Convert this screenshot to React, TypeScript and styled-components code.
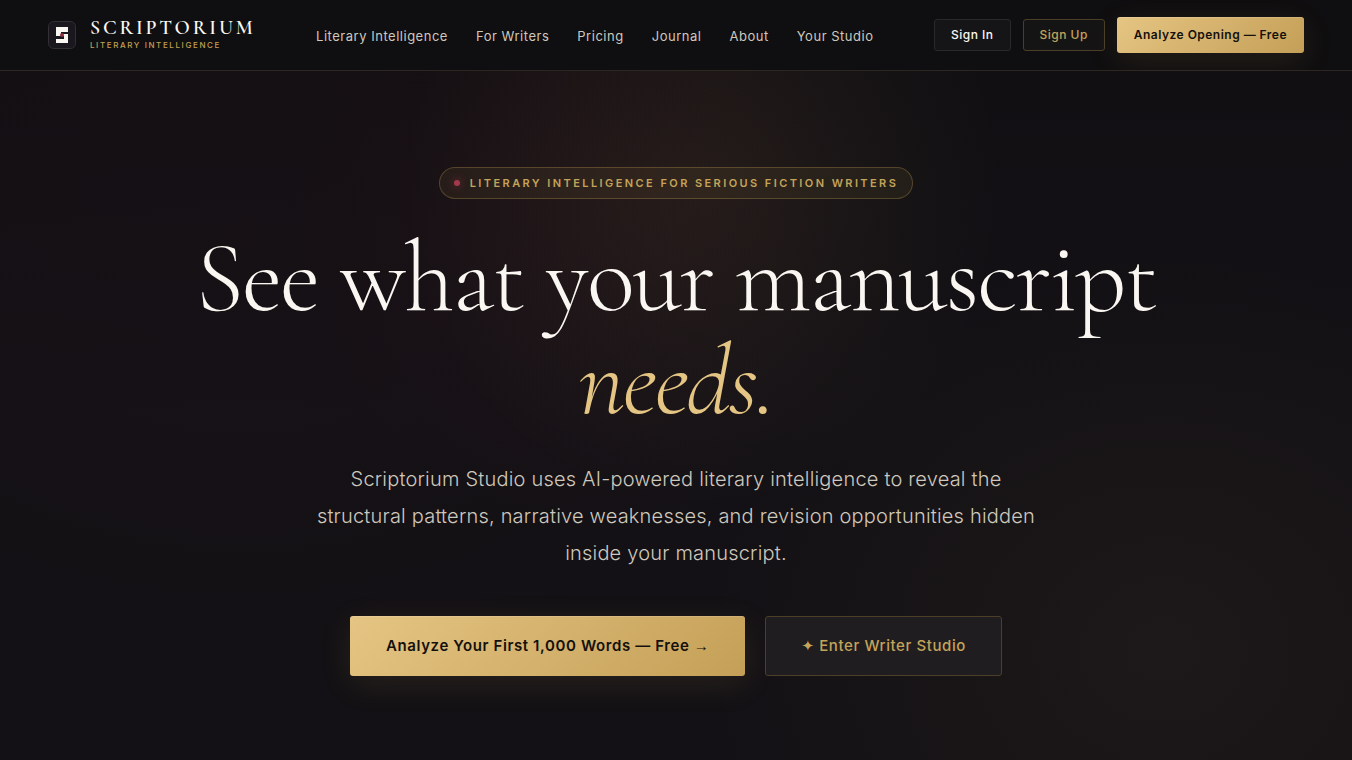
import React from "react";
import styled, { createGlobalStyle, css } from "styled-components";

const sans = `Inter, "Liberation Sans", sans-serif`;
const serif = `"Cormorant Garamond", "Liberation Serif", serif`;

const GlobalStyle = createGlobalStyle`
  *, *::before, *::after { box-sizing: border-box; }
  body {
    margin: 0;
    background: #0d0c0e;
    color: #faf7f2;
    font-family: ${sans};
    -webkit-font-smoothing: antialiased;
  }
`;

const Page = styled.div`
  min-height: 100vh;
  display: flex;
  flex-direction: column;
`;

const Header = styled.header`
  display: flex;
  align-items: center;
  justify-content: space-between;
  padding: 17px 48px;
  background: #0f0e10;
  border-bottom: 1px solid #2c2720;
`;

const Brand = styled.a`
  display: flex;
  align-items: center;
  gap: 14px;
  color: inherit;
  text-decoration: none;
`;

const BrandText = styled.span`
  display: flex;
  flex-direction: column;
`;

const BrandName = styled.span`
  font-family: ${serif};
  font-size: 20px;
  line-height: 20px;
  font-weight: 600;
  letter-spacing: 0.14em;
`;

const BrandTag = styled.span`
  font-size: 8px;
  line-height: 14px;
  font-weight: 500;
  letter-spacing: 0.2em;
  text-transform: uppercase;
  color: #c4a052;
`;

const Nav = styled.nav`
  display: flex;
  gap: 28px;
  padding-top: 2px;
`;

const NavLink = styled.a`
  font-size: 13px;
  line-height: 20px;
  letter-spacing: 0.04em;
  color: #cfc8bd;
  text-decoration: none;
`;

const Actions = styled.div<{ $large?: boolean }>`
  display: flex;
  align-items: center;
  justify-content: center;
  flex-wrap: wrap;
  gap: ${(p) => (p.$large ? 20 : 12)}px;
`;

const tones = {
  primary: css`
    color: #14100c;
    font-weight: 600;
    border: 0;
    background: linear-gradient(135deg, #e5c583 0%, #c49f57 100%);
    box-shadow: 0 8px 32px rgba(196, 160, 82, 0.12), inset 0 1px 0 rgba(255, 255, 255, 0.15);
  `,
  gold: css`
    color: #c4a35a;
    border: 1px solid #4b3f29;
    background: #151415;
  `,
  plain: css`
    color: #faf7f2;
    border: 1px solid #29282a;
    background: #151517;
  `,
};

const Button = styled.button<{ $tone: keyof typeof tones; $size?: "large" }>`
  font-family: ${sans};
  font-size: 12px;
  line-height: 20px;
  font-weight: 500;
  letter-spacing: 0.04em;
  padding: ${(p) => (p.$tone === "primary" ? "8px 17px" : "5px 16px")};
  border-radius: 3px;
  cursor: pointer;
  ${(p) => tones[p.$tone]}
  ${(p) =>
    p.$size === "large" &&
    css`
      font-size: 15px;
      min-height: 60px;
      padding: 0 ${p.$tone === "primary" ? 36 : 35}px;
    `}
  ${(p) => p.$size === "large" && p.$tone === "gold" && css`background: #1f1d1f;`}
`;

const Arrow = styled.span`
  font-family: "Liberation Sans", sans-serif;
`;

const Star = styled.span`
  font-family: "DejaVu Sans", sans-serif;
  font-weight: 700;
`;

const Hero = styled.main`
  flex: 1;
  display: flex;
  flex-direction: column;
  align-items: center;
  padding: 96px 48px 80px;
  text-align: center;
  background:
    radial-gradient(ellipse 300px 320px at 52% 17%, rgba(180, 160, 82, 0.08), transparent),
    radial-gradient(ellipse 320px 320px at 45% 20%, rgba(120, 30, 50, 0.08), transparent),
    radial-gradient(ellipse 620px 460px at 18% 24%, rgba(120, 30, 50, 0.04), transparent),
    radial-gradient(ellipse 460px 400px at 86% 84%, rgba(190, 140, 82, 0.06), transparent),
    linear-gradient(180deg, #110f12 0%, #131115 50%, #131115 100%);
`;

const Pill = styled.p`
  display: flex;
  align-items: center;
  gap: 10px;
  margin: 0;
  padding: 7px 14px;
  border: 1px solid rgba(196, 160, 82, 0.3);
  border-radius: 16px;
  background: rgba(196, 160, 82, 0.08);
  color: #c4a35a;
  font-size: 11px;
  line-height: 16px;
  font-weight: 600;
  letter-spacing: 0.22em;
  text-transform: uppercase;
`;

const Dot = styled.span`
  width: 6px;
  height: 6px;
  border-radius: 50%;
  background: #a23a4c;
  box-shadow: 0 0 8px #8b2e3f;
`;

const Title = styled.h1`
  margin: 28px 0 0;
  max-width: 1100px;
  font-family: ${serif};
  font-size: 100px;
  line-height: 103px;
  font-weight: 300;
  letter-spacing: -0.02em;
  em {
    color: #e5c583;
  }
`;

const Lead = styled.p`
  margin: 28px 0 0;
  max-width: 730px;
  font-size: 20px;
  line-height: 37px;
  font-weight: 300;
  letter-spacing: 0.01em;
  color: #cfc8bd;
`;

const HeroActions = styled(Actions)`
  margin-top: 44px;
`;

const links = ["Literary Intelligence", "For Writers", "Pricing", "Journal", "About", "Your Studio"];

function Logo() {
  return (
    <svg width="28" height="28" viewBox="0 0 28 28" aria-hidden="true">
      <rect x="0.5" y="0.5" width="27" height="27" rx="5" fill="#1a181e" stroke="#332f34" />
      <path d="M8 6h12v5h-7v2h7v9H8v-4h8v-3H8z" fill="#faf7f2" />
      <circle cx="14" cy="14" r="2" fill="#8b2e3f" />
    </svg>
  );
}

export default function App() {
  return (
    <Page>
      <GlobalStyle />
      <Header>
        <Brand href="#">
          <Logo />
          <BrandText>
            <BrandName>SCRIPTORIUM</BrandName>
            <BrandTag>Literary Intelligence</BrandTag>
          </BrandText>
        </Brand>
        <Nav>
          {links.map((label) => (
            <NavLink key={label} href="#">{label}</NavLink>
          ))}
        </Nav>
        <Actions>
          <Button $tone="plain">Sign In</Button>
          <Button $tone="gold">Sign Up</Button>
          <Button $tone="primary">Analyze Opening — Free</Button>
        </Actions>
      </Header>
      <Hero>
        <Pill>
          <Dot />
          Literary Intelligence for Serious Fiction Writers
        </Pill>
        <Title>
          See what your manuscript <br />
          <em>needs.</em>
        </Title>
        <Lead>
          Scriptorium Studio uses AI-powered literary intelligence to reveal the structural
          patterns, narrative weaknesses, and revision opportunities hidden inside your manuscript.
        </Lead>
        <HeroActions $large>
          <Button $tone="primary" $size="large">
            Analyze Your First 1,000 Words — Free <Arrow>→</Arrow>
          </Button>
          <Button $tone="gold" $size="large">
            <Star>✦</Star> Enter Writer Studio
          </Button>
        </HeroActions>
      </Hero>
    </Page>
  );
}
